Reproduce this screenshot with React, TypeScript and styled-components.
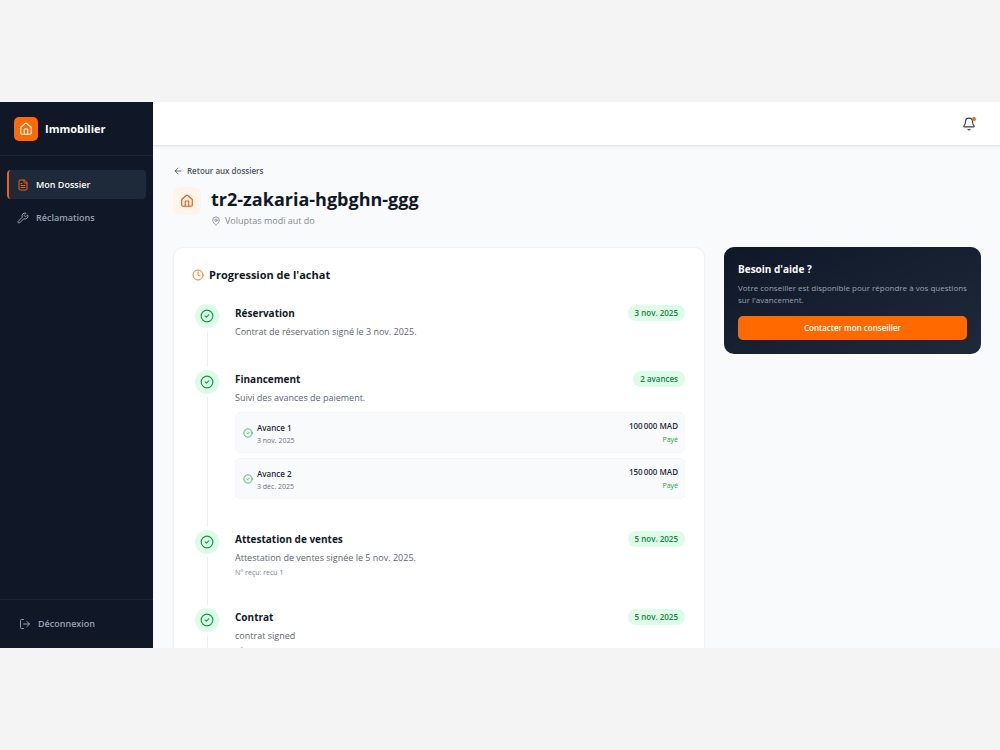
import React from "react";
import styled, { createGlobalStyle } from "styled-components";
import {
  ArrowLeft,
  Bell,
  CircleCheck,
  Clock,
  FileText,
  House,
  LogOut,
  MapPin,
  Wrench,
} from "lucide-react";

const GlobalStyle = createGlobalStyle`
  *, *::before, *::after { box-sizing: border-box; }
  body {
    margin: 0;
    background: #f4f4f4;
    color: #101828;
    font-family: "Open Sans", "Noto Sans", sans-serif;
    font-size: 9px;
    line-height: 14px;
  }
  h1, h2, h3, p, ul, ol { margin: 0; padding: 0; }
  ul, ol { list-style: none; }
  svg { display: block; flex: none; }
`;

const Page = styled.div`
  height: 100vh;
  padding: 102px 0;
`;

const Shell = styled.div`
  display: flex;
  height: 100%;
  overflow: hidden;
  background: #f9fafb;
`;

const Sidebar = styled.aside`
  display: flex;
  flex-direction: column;
  flex: none;
  width: 153px;
  background: #101828;
`;

const Brand = styled.div`
  display: flex;
  align-items: center;
  gap: 7px;
  height: 54px;
  padding: 0 14px;
  border-bottom: 1px solid #1b2535;
  color: #ffffff;
  font-size: 11px;
  font-weight: 700;
`;

const IconTile = styled.span<{ $size: number; $soft?: boolean }>`
  display: grid;
  place-items: center;
  flex: none;
  width: ${(p) => p.$size}px;
  height: ${(p) => p.$size}px;
  border-radius: ${(p) => (p.$soft ? 7 : 5)}px;
  background: ${(p) => (p.$soft ? "#fff4ea" : "#ff6900")};
  color: ${(p) => (p.$soft ? "#e8590c" : "#ffffff")};
`;

const Nav = styled.nav`
  flex: 1;
  display: flex;
  flex-direction: column;
  gap: 4px;
  padding: 14px 7px;
`;

const NavLink = styled.a<{ $active?: boolean }>`
  display: flex;
  align-items: center;
  gap: 7px;
  height: 29px;
  padding: 0 8px;
  border-left: 2px solid ${(p) => (p.$active ? "#f56200" : "transparent")};
  border-radius: 4px;
  background: ${(p) => (p.$active ? "#1e2939" : "transparent")};
  color: ${(p) => (p.$active ? "#ffffff" : "#99a1af")};
  font-weight: 600;
  text-decoration: none;

  svg { color: ${(p) => (p.$active ? "#f56200" : "#99a1af")}; }
`;

const SidebarFooter = styled.div`
  padding: 10px 7px;
  border-top: 1px solid #1b2535;
`;

const LogoutButton = styled.button`
  display: flex;
  align-items: center;
  gap: 7px;
  width: 100%;
  height: 28px;
  padding: 0 12px;
  border: 0;
  background: none;
  color: #99a1af;
  font: inherit;
  font-weight: 600;
`;

const Main = styled.div`
  flex: 1;
  display: flex;
  flex-direction: column;
  min-width: 0;
`;

const TopBar = styled.header`
  display: flex;
  align-items: center;
  justify-content: flex-end;
  flex: none;
  height: 44px;
  padding: 0 24px;
  border-bottom: 1px solid #e5e7eb;
  background: #ffffff;
  box-shadow: 0 1px 2px rgba(0, 0, 0, 0.06);
`;

const BellButton = styled.button`
  position: relative;
  padding: 0;
  border: 0;
  background: none;
  color: #364153;
`;

const BellDot = styled.span`
  position: absolute;
  top: 0;
  right: 0;
  width: 4px;
  height: 4px;
  border-radius: 50%;
  background: #ff6900;
`;

const Content = styled.main`
  flex: 1;
  min-height: 0;
  overflow: hidden;
  padding: 18px 19px 0 20px;
`;

const BackLink = styled.a`
  display: inline-flex;
  align-items: center;
  gap: 4px;
  color: #4a5565;
  font-size: 8px;
  font-weight: 600;
  text-decoration: none;
  vertical-align: top;
`;

const TitleRow = styled.div`
  display: flex;
  gap: 10px;
  margin-top: 9px;
`;

const Title = styled.h1`
  font-size: 18px;
  line-height: 24px;
  font-weight: 700;
`;

const Location = styled.p`
  display: flex;
  align-items: center;
  gap: 4px;
  margin-top: 3px;
  color: #828a98;
`;

const Columns = styled.div`
  display: flex;
  align-items: flex-start;
  gap: 19px;
  margin-top: 19px;
`;

const ProgressCard = styled.section`
  flex: 1;
  min-width: 0;
  padding: 19px 19px 20px 18px;
  border: 1px solid #f0f2f4;
  border-radius: 10px;
  background: #ffffff;
  box-shadow: 0 1px 2px rgba(0, 0, 0, 0.05);
`;

const CardTitle = styled.h2`
  display: flex;
  align-items: center;
  gap: 5px;
  font-size: 11px;
  line-height: 16px;
  font-weight: 700;

  svg { color: #ff7a1f; }
`;

const Steps = styled.ol`
  margin-top: 21px;
  padding-left: 3px;
`;

const StepItem = styled.li`
  display: flex;
  gap: 16px;
`;

const Marker = styled.div`
  display: flex;
  flex-direction: column;
  align-items: center;
  gap: 3px;
  flex: none;
  width: 24px;
`;

const MarkerDot = styled.span`
  display: grid;
  place-items: center;
  width: 24px;
  height: 24px;
  border-radius: 50%;
  background: #dcfce7;
  color: #16994a;
`;

const MarkerLine = styled.span`
  flex: 1;
  width: 1px;
  margin-bottom: 3px;
  background: #eceef1;
`;

const StepBody = styled.div`
  flex: 1;
  min-width: 0;
  padding-bottom: 28px;
`;

const StepHead = styled.div`
  display: flex;
  align-items: center;
  justify-content: space-between;
  height: 18px;
`;

const StepTitle = styled.h3`
  font-size: 10px;
  font-weight: 700;
`;

const Badge = styled.span`
  padding: 1px 7px;
  border-radius: 8px;
  background: #dcfce7;
  color: #168244;
  font-size: 8px;
  font-weight: 600;
`;

const StepText = styled.p`
  padding: 3px 0;
  color: #5d6675;
`;

const StepNote = styled.p`
  padding-bottom: 3px;
  font-size: 7px;
  line-height: 9px;
  color: #7a8291;
`;

const Advances = styled.ul`
  display: flex;
  flex-direction: column;
  gap: 5px;
  margin: 4px 0 3px;
`;

const Advance = styled.li`
  display: flex;
  align-items: center;
  gap: 4px;
  height: 41px;
  padding: 0 6px 0 7px;
  border: 1px solid #f5f6f8;
  border-radius: 5px;
  background: #f9fafb;

  svg { color: #22b95a; }
`;

const AdvanceLabel = styled.div`
  flex: 1;
  padding-top: 2px;
`;

const AdvanceAmount = styled.div`
  text-align: right;
`;

const AdvanceMain = styled.p`
  font-size: 8px;
  font-weight: 600;
  line-height: 14px;
  color: #1e2939;
`;

const AdvanceSub = styled.p<{ $paid?: boolean }>`
  font-size: 7px;
  line-height: ${(p) => (p.$paid ? 14 : 12)}px;
  color: ${(p) => (p.$paid ? "#16a34a" : "#6a7282")};
`;

const HelpCard = styled.aside`
  flex: none;
  width: 257px;
  padding: 14px;
  border-radius: 10px;
  background: linear-gradient(to bottom right, #101828, #1e2939);
`;

const HelpTitle = styled.h2`
  color: #ffffff;
  font-size: 10px;
  line-height: 16px;
  font-weight: 700;
`;

const HelpText = styled.p`
  margin: 5px 0 10px;
  color: #99a1af;
  font-size: 8px;
  line-height: 12px;
`;

const ContactButton = styled.button`
  display: block;
  width: 100%;
  height: 24px;
  border: 0;
  border-radius: 5px;
  background: #ff6900;
  color: #ffffff;
  font: inherit;
  font-size: 8px;
  font-weight: 600;
`;

type Payment = { label: string; date: string; amount: string };

type Step = {
  title: string;
  badge: string;
  text: string;
  note?: string;
  payments?: Payment[];
};

const steps: Step[] = [
  {
    title: "Réservation",
    badge: "3 nov. 2025",
    text: "Contrat de réservation signé le 3 nov. 2025.",
  },
  {
    title: "Financement",
    badge: "2 avances",
    text: "Suivi des avances de paiement.",
    payments: [
      { label: "Avance 1", date: "3 nov. 2025", amount: "100\u202f000 MAD" },
      { label: "Avance 2", date: "3 déc. 2025", amount: "150\u202f000 MAD" },
    ],
  },
  {
    title: "Attestation de ventes",
    badge: "5 nov. 2025",
    text: "Attestation de ventes signée le 5 nov. 2025.",
    note: "N° reçu: recu 1",
  },
  {
    title: "Contrat",
    badge: "5 nov. 2025",
    text: "contrat signed",
    note: "N° reçu: cc22",
  },
];

export default function App() {
  return (
    <Page>
      <GlobalStyle />
      <Shell>
        <Sidebar>
          <Brand>
            <IconTile $size={24}>
              <House size={14} />
            </IconTile>
            Immobilier
          </Brand>
          <Nav>
            <NavLink href="#dossier" $active>
              <FileText size={12} />
              Mon Dossier
            </NavLink>
            <NavLink href="#reclamations">
              <Wrench size={12} />
              Réclamations
            </NavLink>
          </Nav>
          <SidebarFooter>
            <LogoutButton type="button">
              <LogOut size={12} />
              Déconnexion
            </LogoutButton>
          </SidebarFooter>
        </Sidebar>
        <Main>
          <TopBar>
            <BellButton type="button" aria-label="Notifications">
              <Bell size={14} />
              <BellDot />
            </BellButton>
          </TopBar>
          <Content>
            <BackLink href="#dossiers">
              <ArrowLeft size={10} />
              Retour aux dossiers
            </BackLink>
            <TitleRow>
              <IconTile $size={28} $soft>
                <House size={14} />
              </IconTile>
              <div>
                <Title>tr2-zakaria-hgbghn-ggg</Title>
                <Location>
                  <MapPin size={10} />
                  Voluptas modi aut do
                </Location>
              </div>
            </TitleRow>
            <Columns>
              <ProgressCard>
                <CardTitle>
                  <Clock size={12} />
                  Progression de l'achat
                </CardTitle>
                <Steps>
                  {steps.map((step) => (
                    <StepItem key={step.title}>
                      <Marker>
                        <MarkerDot>
                          <CircleCheck size={14} />
                        </MarkerDot>
                        <MarkerLine />
                      </Marker>
                      <StepBody>
                        <StepHead>
                          <StepTitle>{step.title}</StepTitle>
                          <Badge>{step.badge}</Badge>
                        </StepHead>
                        <StepText>{step.text}</StepText>
                        {step.note && <StepNote>{step.note}</StepNote>}
                        {step.payments && (
                          <Advances>
                            {step.payments.map((payment) => (
                              <Advance key={payment.label}>
                                <CircleCheck size={10} />
                                <AdvanceLabel>
                                  <AdvanceMain>{payment.label}</AdvanceMain>
                                  <AdvanceSub>{payment.date}</AdvanceSub>
                                </AdvanceLabel>
                                <AdvanceAmount>
                                  <AdvanceMain>{payment.amount}</AdvanceMain>
                                  <AdvanceSub $paid>Payé</AdvanceSub>
                                </AdvanceAmount>
                              </Advance>
                            ))}
                          </Advances>
                        )}
                      </StepBody>
                    </StepItem>
                  ))}
                </Steps>
              </ProgressCard>
              <HelpCard>
                <HelpTitle>Besoin d'aide ?</HelpTitle>
                <HelpText>
                  Votre conseiller est disponible pour répondre à vos questions
                  sur l'avancement.
                </HelpText>
                <ContactButton type="button">
                  Contacter mon conseiller
                </ContactButton>
              </HelpCard>
            </Columns>
          </Content>
        </Main>
      </Shell>
    </Page>
  );
}
